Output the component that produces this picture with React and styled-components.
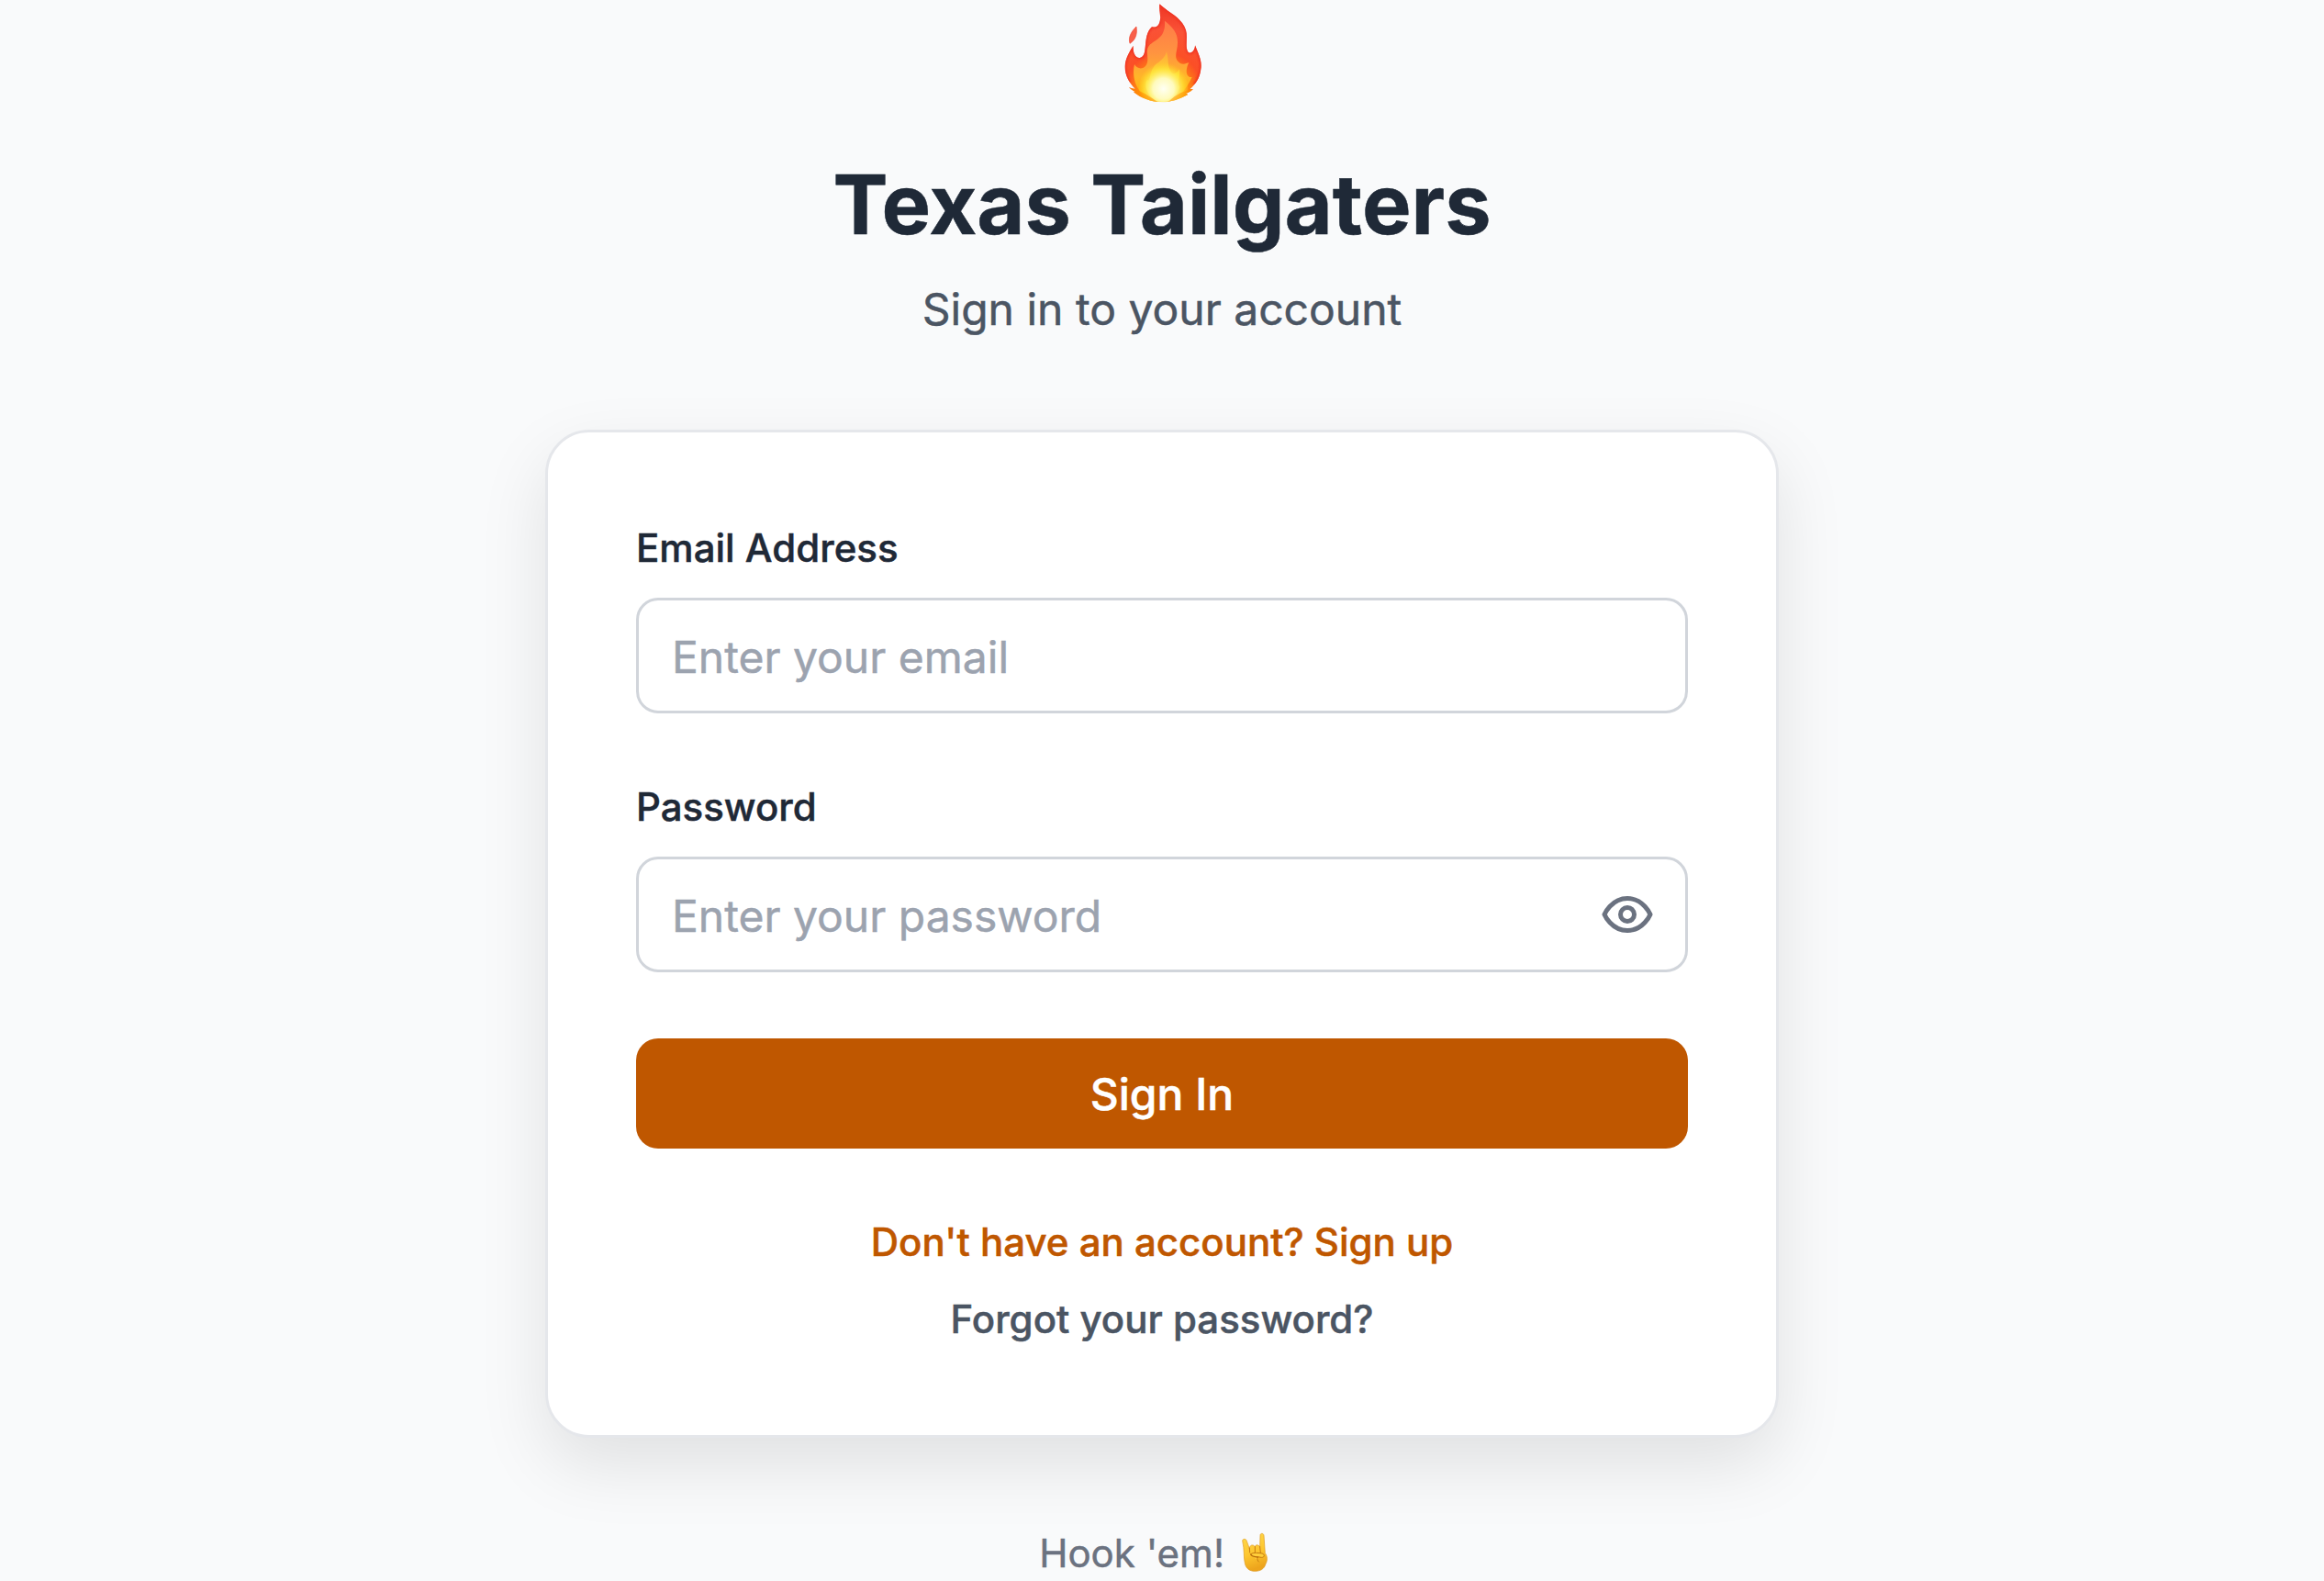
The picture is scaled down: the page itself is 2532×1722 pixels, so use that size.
import React, { useState } from "react";
import styled, { createGlobalStyle } from "styled-components";

const GlobalStyle = createGlobalStyle`
  *, *::before, *::after { box-sizing: border-box; }
  html, body { margin: 0; padding: 0; background: #f9fafb; overflow: hidden; }
  body, input, button {
    font-family: Inter, "Liberation Sans", sans-serif;
    -webkit-font-smoothing: antialiased;
    -webkit-text-stroke: 0.5px currentColor;
  }
`;

const Page = styled.main`
  min-height: 1722px;
  display: flex;
  flex-direction: column;
  align-items: center;
  background: #f9fafb;
`;

const Header = styled.header`
  display: flex;
  flex-direction: column;
  align-items: center;
  margin-bottom: 95px;
`;

const FlameIcon = styled.svg`
  display: block;
  width: 130px;
  height: 120px;
  margin-bottom: 49px;
`;

const Title = styled.h1`
  margin: 0 0 24px;
  font-size: 90px;
  line-height: 108px;
  font-weight: 700;
  color: #1f2937;
`;

const Subtitle = styled.p`
  margin: 0;
  font-size: 48px;
  line-height: 72px;
  color: #4b5563;
`;

const Card = styled.section`
  width: 1344px;
  padding: 96px;
  background: #ffffff;
  border: 3px solid #e5e7eb;
  border-radius: 48px;
  box-shadow: 0 30px 75px rgba(0, 0, 0, 0.1);
`;

const Form = styled.form`
  display: flex;
  flex-direction: column;
  gap: 72px;
`;

const Field = styled.div`
  display: flex;
  flex-direction: column;
  gap: 24px;
`;

const Label = styled.label`
  font-size: 42px;
  line-height: 60px;
  font-weight: 500;
  color: #1f2937;
`;

const InputBox = styled.div`
  display: flex;
  align-items: center;
  height: 126px;
  padding: 0 33px;
  border: 3px solid #d1d5db;
  border-radius: 24px;
  background: #ffffff;
`;

const Input = styled.input`
  flex: 1;
  min-width: 0;
  height: 74px;
  margin: 0;
  padding: 2px 3px 0;
  border: 0;
  outline: 0;
  background: transparent;
  font-size: 48px;
  line-height: 72px;
  color: #1f2937;

  &::placeholder {
    color: #9ca3af;
    opacity: 1;
    -webkit-text-stroke-color: #9ca3af;
  }
`;

const ToggleButton = styled.button`
  display: flex;
  padding: 0;
  border: 0;
  background: none;
  color: #6b7280;
  cursor: pointer;

  svg {
    width: 60px;
    height: 60px;
  }
`;

const SubmitButton = styled.button`
  height: 120px;
  padding: 1px 0 0;
  border: 0;
  border-radius: 24px;
  background: #bf5700;
  color: #ffffff;
  font-size: 48px;
  line-height: 72px;
  font-weight: 500;
  cursor: pointer;
`;

const Links = styled.nav`
  display: flex;
  flex-direction: column;
  align-items: center;
  gap: 24px;
  margin-top: 72px;
`;

const LinkButton = styled.button`
  padding: 0;
  border: 0;
  background: none;
  font-size: 42px;
  line-height: 60px;
  font-weight: 500;
  color: ${({ $accent }) => ($accent ? "#bf5700" : "#4b5563")};
  cursor: pointer;
`;

const Footer = styled.footer`
  display: flex;
  height: 60px;
  margin-top: 96px;
  white-space: pre;
  font-size: 42px;
  line-height: 60px;
  color: #6b7280;
`;

const HornsIcon = styled.svg`
  display: block;
  width: 54px;
  height: 60px;
`;

function Flame() {
  return (
    <FlameIcon viewBox="3 0 390 360" aria-hidden="true">
      <defs>
        <radialGradient id="flameOuter" gradientUnits="userSpaceOnUse" cx="202" cy="300" r="270">
          <stop offset="0" stopColor="#ffb300" />
          <stop offset="0.3" stopColor="#ff8a10" />
          <stop offset="0.48" stopColor="#fb4f26" />
          <stop offset="0.75" stopColor="#fa5236" />
          <stop offset="1" stopColor="#f03a28" />
        </radialGradient>
        <linearGradient id="flameMid" gradientUnits="userSpaceOnUse" x1="0" y1="70" x2="0" y2="330">
          <stop offset="0" stopColor="#ff7a48" />
          <stop offset="0.4" stopColor="#ff9440" />
          <stop offset="0.7" stopColor="#ffb628" />
          <stop offset="1" stopColor="#ffb000" />
        </linearGradient>
        <linearGradient id="flameInner" gradientUnits="userSpaceOnUse" x1="0" y1="165" x2="0" y2="330">
          <stop offset="0" stopColor="#ffa838" />
          <stop offset="0.5" stopColor="#ffd834" />
          <stop offset="1" stopColor="#ffe63c" />
        </linearGradient>
        <radialGradient id="flameGlow" gradientUnits="userSpaceOnUse" cx="203" cy="290" r="86">
          <stop offset="0" stopColor="#fffff4" />
          <stop offset="0.4" stopColor="#fffcc4" stopOpacity="0.95" />
          <stop offset="0.75" stopColor="#ffee40" stopOpacity="0.6" />
          <stop offset="1" stopColor="#ffd820" stopOpacity="0" />
        </radialGradient>
        <filter id="flameSoft" x="-10%" y="-10%" width="120%" height="120%">
          <feGaussianBlur stdDeviation="3" />
        </filter>
        <clipPath id="flameClip">
          <path d="M190 13C213 38 262 54 276 98C283 123 273 150 282 168C291 180 306 166 306 148C316 174 330 199 325 226C322 256 307 276 290 291L300 291C291 300 283 304 276 305L283 309C261 319 240 332 202 334C160 334 129 320 105 301L110 300C101 295 94 290 90 285C98 289 105 290 110 290C90 270 76 244 77 216C78 190 92 169 104 149C102 169 110 190 125 189C156 186 131 118 165 88C180 91 190 84 192 63C194 48 187 36 190 13Z" />
        </clipPath>
      </defs>
      <path fill="#f8604a" stroke="#ee4430" strokeWidth="2" d="M114 87C117 106 115 128 93 142C87 122 97 104 114 87Z" />
      <g clipPath="url(#flameClip)">
        <rect x="70" y="0" width="270" height="345" fill="url(#flameOuter)" />
        <path filter="url(#flameSoft)" fill="none" stroke="#ee3222" strokeWidth="8" d="M190 13C213 38 262 54 276 98C283 123 273 150 282 168C291 180 306 166 306 148C316 174 330 199 325 226C322 250 312 265 303 276M91 270C80 250 76 238 77 216C78 190 92 169 104 149C102 169 110 190 125 189C156 186 131 118 165 88C180 91 190 84 192 63" />
        <path fill="url(#flameMid)" d="M207 68C233 91 249 106 249 137C250 162 237 184 248 198C262 216 276 207 286 205C273 228 276 254 296 252C284 277 268 307 232 326C197 338 151 329 130 303C106 277 101 239 108 210C118 229 145 228 150 203C154 182 143 164 157 148C172 129 211 127 207 68Z" />
        <path fill="url(#flameInner)" d="M213 168C221 194 214 216 228 235C238 249 250 234 255 226C258 252 246 272 256 283C252 306 230 331 203 333C172 332 154 313 146 288C142 263 151 258 154 263C162 249 160 230 175 213C190 199 206 194 213 168Z" />
        <ellipse cx="203" cy="287" rx="80" ry="86" fill="url(#flameGlow)" />
        <path fill="#ff8a00" opacity="0.55" d="M88 284C112 291 143 302 184 334L120 330Z" />
        <path fill="#ff9000" opacity="0.5" d="M300 289C270 299 246 305 218 334L280 330Z" />
      </g>
    </FlameIcon>
  );
}

function Horns() {
  return (
    <HornsIcon viewBox="46 6 162 180" aria-hidden="true">
      <defs>
        <linearGradient id="hornsSkin" x1="0" y1="0" x2="0.25" y2="1">
          <stop offset="0" stopColor="#ffd84c" />
          <stop offset="0.6" stopColor="#fdc62f" />
          <stop offset="1" stopColor="#eda41c" />
        </linearGradient>
      </defs>
      <path
        fill="url(#hornsSkin)"
        stroke="#dc9a25"
        strokeWidth="2"
        strokeLinejoin="round"
        d="M69 55C69 48 79 47 82 53L92 80C92 68 104 65 110 74C111 67 122 66 126 75L127 37C127 29 138 29 139 37L143 95C151 105 151 119 145 130C140 147 128 154 109 154C93 154 80 145 77 128C72 105 76 85 69 55Z"
      />
      <path fill="none" stroke="#c87b12" strokeWidth="3" strokeLinecap="round" d="M92 78L93 93M110 74L110 93M126 74L128 94" />
      <path
        fill="#ffce3b"
        stroke="#b96c0b"
        strokeWidth="2.5"
        strokeLinejoin="round"
        d="M96 98C103 92 123 94 133 96C142 98 143 109 131 109L119 107C115 115 119 120 123 124"
      />
      <path fill="none" stroke="#b96c0b" strokeWidth="4" strokeLinecap="round" d="M96 99C99 106 107 107 119 108" />
    </HornsIcon>
  );
}

function EyeIcon() {
  return (
    <svg
      viewBox="0 0 24 24"
      fill="none"
      stroke="currentColor"
      strokeWidth="2"
      strokeLinecap="round"
      strokeLinejoin="round"
      aria-hidden="true"
    >
      <path d="M2 12s3-7 10-7 10 7 10 7-3 7-10 7-10-7-10-7Z" />
      <circle cx="12" cy="12" r="3" />
    </svg>
  );
}

export default function App() {
  const [visible, setVisible] = useState(false);

  return (
    <>
      <GlobalStyle />
      <Page>
        <Header>
          <Flame />
          <Title>Texas Tailgaters</Title>
          <Subtitle>Sign in to your account</Subtitle>
        </Header>
        <Card>
          <Form onSubmit={(event) => event.preventDefault()}>
            <Field>
              <Label htmlFor="email">Email Address</Label>
              <InputBox>
                <Input id="email" type="email" placeholder="Enter your email" />
              </InputBox>
            </Field>
            <Field>
              <Label htmlFor="password">Password</Label>
              <InputBox>
                <Input
                  id="password"
                  type={visible ? "text" : "password"}
                  placeholder="Enter your password"
                />
                <ToggleButton type="button" onClick={() => setVisible(!visible)}>
                  <EyeIcon />
                </ToggleButton>
              </InputBox>
            </Field>
            <SubmitButton type="submit">Sign In</SubmitButton>
          </Form>
          <Links>
            <LinkButton $accent>Don't have an account? Sign up</LinkButton>
            <LinkButton>Forgot your password?</LinkButton>
          </Links>
        </Card>
        <Footer>
          <span>Hook 'em! </span>
          <Horns />
        </Footer>
      </Page>
    </>
  );
}
